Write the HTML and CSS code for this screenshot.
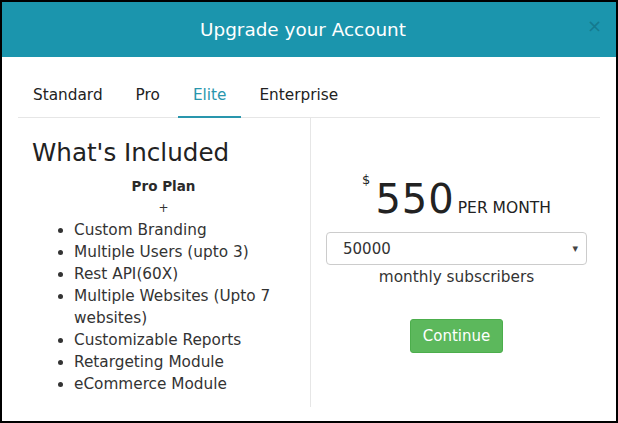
FILE: index.html
```html
<!DOCTYPE html>
<html lang="en">
<head>
  <meta charset="UTF-8">
  <title>Upgrade your Account</title>
  <link rel="stylesheet" href="styles.css">
</head>
<body>

<div class="modal">
  <div class="modal-header">
    <h2>Upgrade your Account</h2>
    <span class="close">&times;</span>
  </div>

  <div class="modal-body">
    <ul class="tabs">
      <li>Standard</li>
      <li>Pro</li>
      <li class="active">Elite</li>
      <li>Enterprise</li>
    </ul>

    <div class="plan">
      <div class="included">
        <h3>What's Included</h3>
        <p class="base">Pro Plan</p>
        <p class="plus">+</p>
        <ul class="features">
          <li>Custom Branding</li>
          <li>Multiple Users (upto 3)</li>
          <li>Rest API(60X)</li>
          <li>Multiple Websites (Upto 7 websites)</li>
          <li>Customizable Reports</li>
          <li>Retargeting Module</li>
          <li>eCommerce Module</li>
        </ul>
      </div>

      <div class="pricing">
        <div class="price">
          <span class="currency">$</span>
          <span class="amount">550</span>
          <span class="period">PER MONTH</span>
        </div>
        <div class="select">
          <span>50000</span>
          <span class="caret">&#9662;</span>
        </div>
        <p class="subs">monthly subscribers</p>
        <button>Continue</button>
      </div>
    </div>
  </div>
</div>

</body>
</html>
```

FILE: styles.css
```css
/* page */
body {
  margin: 0;
  font-family: 'DejaVu Sans', sans-serif;
  color: #333;
}

.modal {
  width: 618px;
  height: 423px;
  border: 2px solid #000;
  box-sizing: border-box;
  background: #fff;
}

/* header */
.modal-header {
  height: 55px;
  background: #1b95ad;
  display: flex;
  align-items: center;
  justify-content: center;
  position: relative;
}

.modal-header h2 {
  margin: 0 12px 0 0;
  font-size: 18.4px;
  font-weight: normal;
  color: #fff;
}

.close {
  position: absolute;
  right: 14px;
  top: 13px;
  font-size: 18px;
  color: #157a8f;
}

.modal-body {
  padding: 0 16px;
}

/* tabs */
.tabs {
  list-style: none;
  margin: 0;
  padding: 0;
  display: flex;
  height: 60px;
  align-items: flex-end;
  border-bottom: 1px solid #e6e6e6;
}

.tabs li {
  padding: 0 15px 12px;
  margin-right: 3px;
  font-size: 15.3px;
  border-bottom: 2px solid transparent;
  margin-bottom: -1px;
  color: #222;
}

.tabs li.active {
  color: #2996ad;
  border-bottom-color: #2996ad;
}

/* plan */
.plan {
  display: grid;
  grid-template-columns: 292px 292px;
  height: 289px;
}

.included {
  padding: 20px 15px 0 14px;
}

.included h3 {
  margin: 0;
  font-size: 24.6px;
  line-height: 30px;
  font-weight: normal;
  color: #222;
}

.base {
  margin: 7px 0 0;
  text-align: center;
  font-weight: bold;
  font-size: 13.5px;
  line-height: 22px;
  color: #2a2a2a;
}

.plus {
  margin: 0;
  text-align: center;
  font-size: 12px;
  line-height: 22px;
}

.features {
  margin: 0;
  padding-left: 42px;
  font-size: 15.3px;
  line-height: 22px;
}

.pricing {
  border-left: 1px solid #e6e6e6;
  display: flex;
  flex-direction: column;
  align-items: center;
  padding: 61px 15px 0;
}

.price {
  display: flex;
  align-items: baseline;
  color: #222;
}

.currency {
  font-size: 13px;
  line-height: 13px;
  align-self: flex-start;
  margin: -6px 5px 0 0;
}

.amount {
  font-size: 40px;
  line-height: 40px;
  letter-spacing: 1px;
}

.period {
  font-size: 15.5px;
  margin-left: 3px;
}

.select {
  margin-top: 13px;
  width: 100%;
  height: 33px;
  box-sizing: border-box;
  border: 1px solid #ccc;
  border-radius: 4px;
  display: flex;
  align-items: center;
  justify-content: space-between;
  padding: 0 8px 0 16px;
  font-size: 15px;
}

.caret {
  font-size: 11px;
  color: #444;
}

.subs {
  margin: 2px 0 0;
  font-size: 15.3px;
  line-height: 20px;
}

button {
  margin-top: 32px;
  background: #5cb85c;
  border: 1px solid #4cae4c;
  border-radius: 3px;
  color: #fff;
  font-family: inherit;
  font-size: 15px;
  height: 34px;
  padding: 0 12px;
}
```
